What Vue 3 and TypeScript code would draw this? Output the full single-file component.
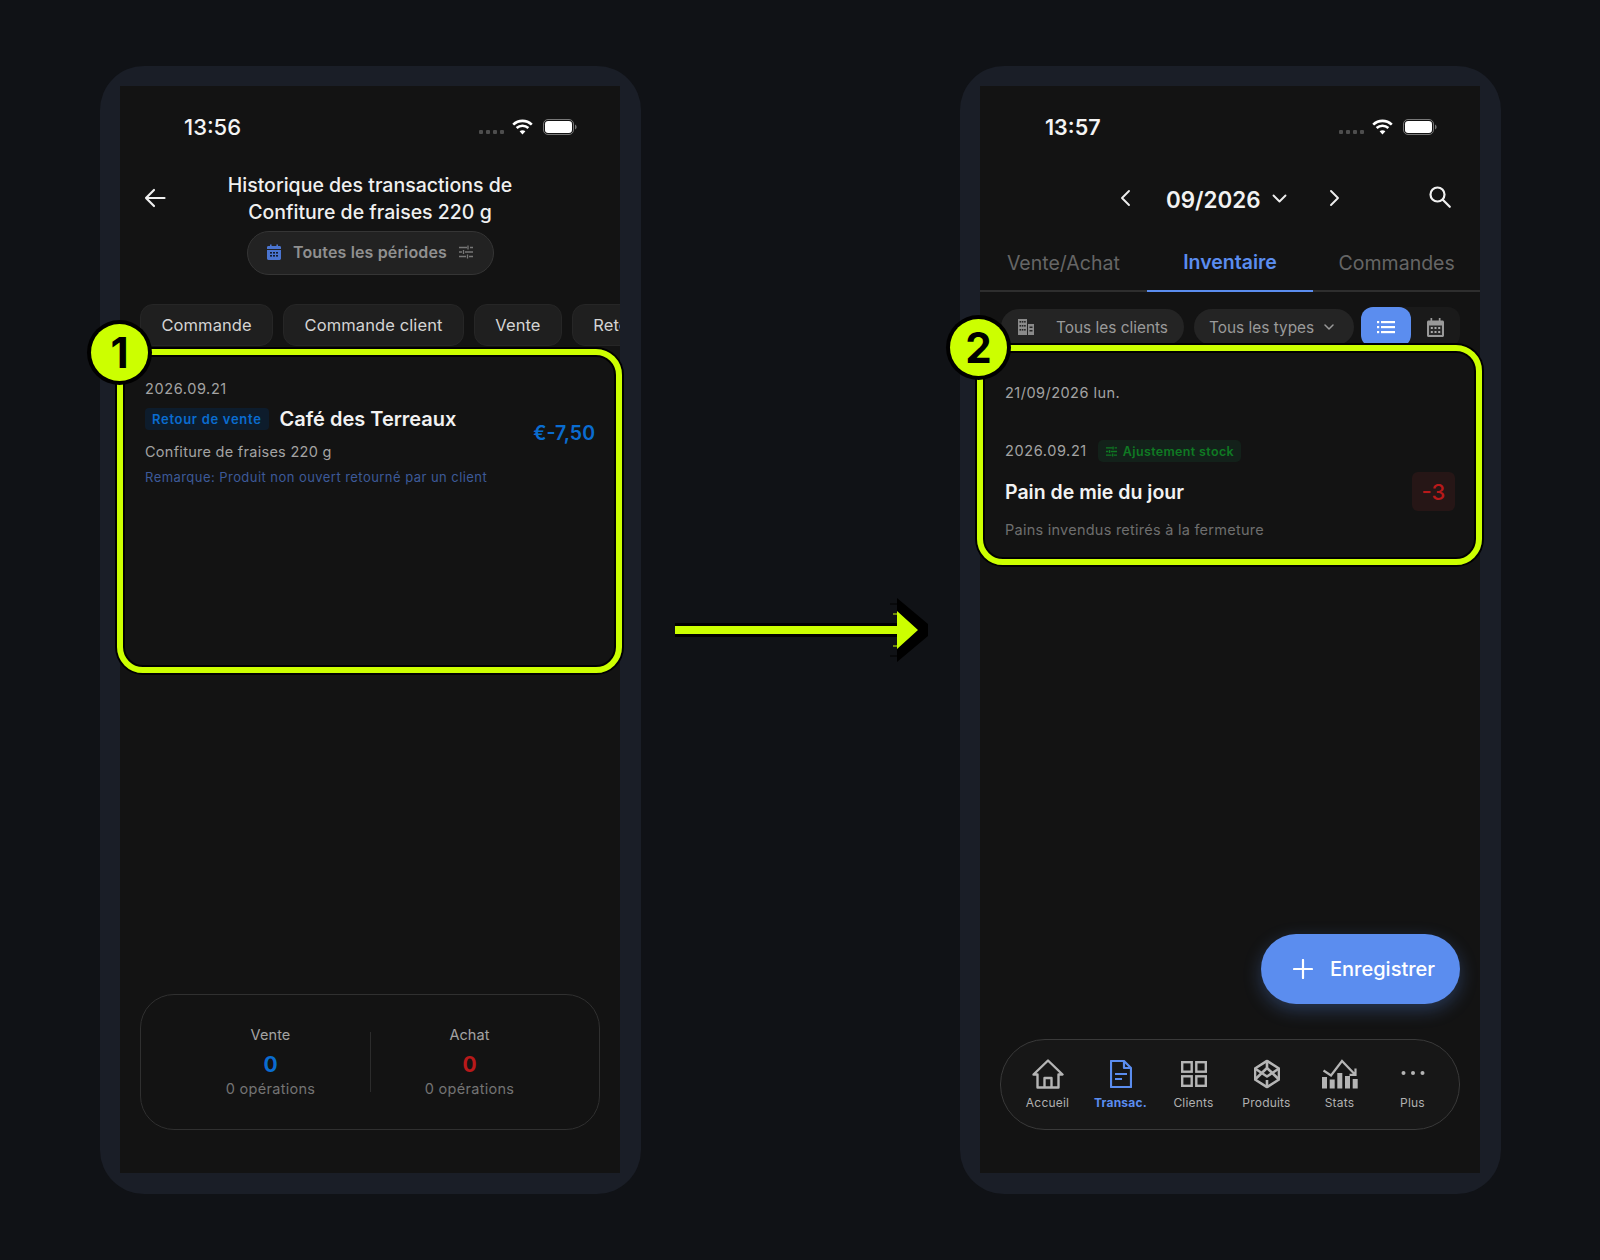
<script setup lang="ts">
const chips = ['Commande', 'Commande client', 'Vente', 'Retour de vente']

const summary = [
  { label: 'Vente', tone: 'sale' },
  { label: 'Achat', tone: 'buy' }
]

const navItems = [
  { label: 'Accueil', icon: 'home' },
  { label: 'Transac.', icon: 'doc', active: true },
  { label: 'Clients', icon: 'grid' },
  { label: 'Produits', icon: 'box' },
  { label: 'Stats', icon: 'stats' },
  { label: 'Plus', icon: 'more' }
]
</script>

<template>
  <div class="page">
    <!-- left phone -->
    <div class="phone">
      <div class="screen">
        <div class="status">
          <span class="time">13:56</span>
          <div class="status-icons">
            <svg width="25" height="6" viewBox="0 0 25 6" class="dots"><rect x="0" y="1" width="4" height="4" rx="1"/><rect x="7" y="1" width="4" height="4" rx="1"/><rect x="14" y="1" width="4" height="4" rx="1"/><rect x="21" y="1" width="4" height="4" rx="1"/></svg>
            <svg class="wifi" width="21" height="16" viewBox="0 0 21 16" fill="none" stroke="#fff" stroke-width="2.6"><path d="M1.2 5.6c5.3-5 13.3-5 18.6 0"/><path d="M4.6 9c3.4-3 8.4-3 11.8 0"/><path d="M10.5 15.4 7.6 12.3c1.7-1.4 4.1-1.4 5.8 0z" fill="#fff" stroke="none"/></svg>
            <svg width="34" height="16" viewBox="0 0 34 16"><rect x=".5" y=".5" width="30" height="15" rx="4.5" fill="none" stroke="#777"/><rect x="2" y="2" width="27" height="12" rx="3.2" fill="#fff"/><path d="M32 5.5c1 .4 1.6 1.4 1.6 2.5s-.6 2.1-1.6 2.5z" fill="#777"/></svg>
          </div>
        </div>

        <div class="detail-head">
          <svg class="back" width="22" height="20" viewBox="0 0 22 20" fill="none" stroke="#f0f0f0" stroke-width="2.2" stroke-linecap="round" stroke-linejoin="round"><path d="M20.5 10H2M10 2 2 10l8 8"/></svg>
          <h1 class="detail-title">Historique des transactions de<br />Confiture de fraises 220 g</h1>
          <div class="period">
            <svg width="14" height="16" viewBox="0 0 14 16"><path d="M0 3.4c0-.8.6-1.4 1.4-1.4H3V.5h1.6V2h4.8V.5H11V2h1.6c.8 0 1.4.6 1.4 1.4V5H0zM0 6h14v8.6c0 .8-.6 1.4-1.4 1.4H1.4C.6 16 0 15.4 0 14.6z" fill="#4a74d0"/><g fill="#131b2e"><rect x="3" y="8" width="2" height="1.6"/><rect x="6" y="8" width="2" height="1.6"/><rect x="9" y="8" width="2" height="1.6"/><rect x="3" y="11" width="2" height="1.6"/><rect x="6" y="11" width="2" height="1.6"/><rect x="9" y="11" width="2" height="1.6"/></g></svg>
            <span>Toutes les périodes</span>
            <svg width="14" height="14" viewBox="0 0 14 14" fill="none" stroke="#777" stroke-width="1.3"><path d="M0 2.5h8M11 2.5h3M9 .5v4M0 7h3M6 7h8M4.5 5v4M0 11.5h7M10 11.5h4M8.5 9.5v4"/></svg>
          </div>
        </div>

        <div class="chips">
          <div v-for="chip in chips" :key="chip" class="chip">{{ chip }}</div>
        </div>

        <div class="tx">
          <div class="tx-main">
            <div class="tx-date">2026.09.21</div>
            <div class="tx-row">
              <span class="tag-blue">Retour de vente</span>
              <span class="tx-name">Café des Terreaux</span>
            </div>
            <div class="tx-product">Confiture de fraises 220 g</div>
            <div class="tx-note">Remarque: Produit non ouvert retourné par un client</div>
          </div>
          <div class="tx-amount">€-7,50</div>
        </div>

        <div class="summary">
          <div v-for="item in summary" :key="item.label" class="sum-col">
            <div class="sum-label">{{ item.label }}</div>
            <div class="sum-value" :class="item.tone">0</div>
            <div class="sum-ops">0 opérations</div>
          </div>
          <div class="sum-divider"></div>
        </div>
      </div>
    </div>

    <!-- arrow between phones -->
    <svg class="arrow" width="319" height="80" viewBox="641 590 319 80">
      <path d="M675 623H897V598L928 624V636L897 662V637H675Z" fill="#000" />
      <path d="M890 604h7M890 656h7" stroke="#000" stroke-width="1" />
      <path d="M675 626H897V611L918 630 897 649V634H675Z" fill="#ccff00" />
      <path d="M893 614h4M893 646h4" stroke="#ccff00" stroke-width="1" />
    </svg>

    <!-- right phone -->
    <div class="phone">
      <div class="screen">
        <div class="status">
          <span class="time time-two">13:57</span>
          <div class="status-icons">
            <svg width="25" height="6" viewBox="0 0 25 6" class="dots"><rect x="0" y="1" width="4" height="4" rx="1"/><rect x="7" y="1" width="4" height="4" rx="1"/><rect x="14" y="1" width="4" height="4" rx="1"/><rect x="21" y="1" width="4" height="4" rx="1"/></svg>
            <svg class="wifi" width="21" height="16" viewBox="0 0 21 16" fill="none" stroke="#fff" stroke-width="2.6"><path d="M1.2 5.6c5.3-5 13.3-5 18.6 0"/><path d="M4.6 9c3.4-3 8.4-3 11.8 0"/><path d="M10.5 15.4 7.6 12.3c1.7-1.4 4.1-1.4 5.8 0z" fill="#fff" stroke="none"/></svg>
            <svg width="34" height="16" viewBox="0 0 34 16"><rect x=".5" y=".5" width="30" height="15" rx="4.5" fill="none" stroke="#777"/><rect x="2" y="2" width="27" height="12" rx="3.2" fill="#fff"/><path d="M32 5.5c1 .4 1.6 1.4 1.6 2.5s-.6 2.1-1.6 2.5z" fill="#777"/></svg>
          </div>
        </div>

        <div class="month-bar">
          <svg class="prev" width="11" height="18" viewBox="0 0 11 18" fill="none" stroke="#eee" stroke-width="1.9" stroke-linecap="round" stroke-linejoin="round"><path d="M9 2 2 9l7 7"/></svg>
          <span class="month">09/2026</span>
          <svg class="caret" width="15" height="9" viewBox="0 0 15 9" fill="none" stroke="#eee" stroke-width="1.9" stroke-linecap="round" stroke-linejoin="round"><path d="m1.5 1.5 6 6 6-6"/></svg>
          <svg class="next" width="11" height="18" viewBox="0 0 11 18" fill="none" stroke="#eee" stroke-width="1.9" stroke-linecap="round" stroke-linejoin="round"><path d="m2 2 7 7-7 7"/></svg>
          <svg class="search" width="24" height="24" viewBox="0 0 24 24" fill="none" stroke="#f0f0f0" stroke-width="2.2" stroke-linecap="round"><circle cx="9.5" cy="9.5" r="7"/><path d="m14.8 14.8 7 7"/></svg>
        </div>

        <div class="tabs">
          <div class="tab">Vente/Achat</div>
          <div class="tab tab-on">Inventaire</div>
          <div class="tab">Commandes</div>
        </div>

        <div class="filters">
          <div class="filter filter-clients">
            <svg width="16" height="16" viewBox="0 0 16 16" fill="#8a8a8a"><path d="M0 0h9v16H0zM10 5h6v11h-6z"/><g fill="#242424"><rect x="1.5" y="2" width="1.6" height="1.6"/><rect x="3.8" y="2" width="1.6" height="1.6"/><rect x="6.1" y="2" width="1.6" height="1.6"/><rect x="1.5" y="6" width="1.6" height="1.6"/><rect x="3.8" y="6" width="1.6" height="1.6"/><rect x="6.1" y="6" width="1.6" height="1.6"/><rect x="1.5" y="10" width="1.6" height="1.6"/><rect x="3.8" y="10" width="1.6" height="1.6"/><rect x="6.1" y="10" width="1.6" height="1.6"/><rect x="11.5" y="7.5" width="3" height="1.5"/><rect x="11.5" y="11" width="3" height="1.5"/></g></svg>
            <span>Tous les clients</span>
          </div>
          <div class="filter filter-types">
            <span>Tous les types</span>
            <svg width="10" height="7" viewBox="0 0 10 7" fill="none" stroke="#999" stroke-width="1.5" stroke-linecap="round" stroke-linejoin="round"><path d="m1 1 4 4 4-4"/></svg>
          </div>
          <div class="view-switch">
            <div class="view-btn view-on">
              <svg width="18" height="14" viewBox="0 0 18 14" fill="#fff"><rect x="0" y="1" width="2.2" height="2.2"/><rect x="4" y="1" width="14" height="2.2"/><rect x="0" y="6" width="2.2" height="2.2"/><rect x="4" y="6" width="14" height="2.2"/><rect x="0" y="11" width="2.2" height="2.2"/><rect x="4" y="11" width="14" height="2.2"/></svg>
            </div>
            <div class="view-btn">
              <svg width="17" height="19" viewBox="0 0 17 19"><path d="M1.5 2.5H3.5V0h1.7v2.5h6.6V0h1.7v2.5h2c.8 0 1.5.7 1.5 1.5v13.500c0 .8-.7 1.5-1.5 1.5h-14C.7 19 0 18.300 0 17.500V4C0 3.200.7 2.500 1.500 2.500z" fill="#999"/><rect x="2" y="7.5" width="13" height="9.5" fill="#2a2a2a"/><g fill="#aaa"><rect x="3.8" y="9" width="2" height="2"/><rect x="7.5" y="9" width="2" height="2"/><rect x="11.2" y="9" width="2" height="2"/><rect x="3.8" y="13" width="2" height="2"/><rect x="7.5" y="13" width="2" height="2"/><rect x="11.2" y="13" width="2" height="2"/></g></svg>
            </div>
          </div>
        </div>

        <div class="day">21/09/2026 lun.</div>

        <div class="stock">
          <div class="stock-top">
            <span class="tx-date">2026.09.21</span>
            <span class="tag-green">
              <svg width="11" height="11" viewBox="0 0 14 14" fill="none" stroke="#0f7a23" stroke-width="1.6"><path d="M0 2.5h8M11 2.5h3M9 .5v4M0 7h3M6 7h8M4.5 5v4M0 11.5h7M10 11.5h4M8.5 9.5v4"/></svg>
              Ajustement stock
            </span>
          </div>
          <div class="stock-mid">
            <span class="stock-name">Pain de mie du jour</span>
            <span class="stock-qty">-3</span>
          </div>
          <div class="stock-note">Pains invendus retirés à la fermeture</div>
        </div>

        <div class="fab">
          <svg width="20" height="20" viewBox="0 0 20 20" stroke="#fff" stroke-width="2.2" stroke-linecap="round"><path d="M10 1v18M1 10h18"/></svg>
          <span>Enregistrer</span>
        </div>

        <nav class="nav">
          <div v-for="item in navItems" :key="item.label" class="nav-item" :class="{ 'nav-on': item.active }">
            <svg v-if="item.icon === 'home'" width="32" height="30" viewBox="0 0 32 30" fill="none" stroke="#b5b5b5" stroke-width="2.4" stroke-linejoin="round"><path d="M1.5 15.5 16 1.5l14.5 14H26.5V28.5H5.5V15.5z"/><path d="M12.5 28.5V19h7v9.5"/></svg>
            <svg v-else-if="item.icon === 'doc'" width="22" height="28" viewBox="0 0 22 28" fill="none" stroke="#5b8def" stroke-width="2.2" stroke-linejoin="round"><path d="M1 1h13l7 7v19H1z"/><path d="M14 1v7h7M5 14h12M5 19h7"/></svg>
            <svg v-else-if="item.icon === 'grid'" width="26" height="26" viewBox="0 0 26 26" fill="none" stroke="#b5b5b5" stroke-width="2.4"><rect x="1.2" y="1.2" width="9.5" height="9.5"/><rect x="15.3" y="1.2" width="9.5" height="9.5"/><rect x="1.2" y="15.3" width="9.5" height="9.5"/><rect x="15.3" y="15.3" width="9.5" height="9.5"/></svg>
            <svg v-else-if="item.icon === 'box'" width="26" height="29" viewBox="0 0 26 29" fill="none" stroke="#b5b5b5" stroke-width="2.6" stroke-linejoin="round"><path d="M13 1.3 25 9v11l-12 7.7L1 20V9z"/><path d="M13 1.3V8.5M13 20.5v7.2M1 9l12 8 12-8M1 20l12-11.5L25 20"/></svg>
            <svg v-else-if="item.icon === 'stats'" width="36" height="30" viewBox="0 0 36 30"><path d="M1.5 11.5 9 16.5 20 2l13 13.5M33.5 9.5v6.300h-6" fill="none" stroke="#b5b5b5" stroke-width="2.2"/><g fill="#b5b5b5"><rect x="0" y="18" width="5" height="11.5"/><rect x="7.7" y="20.5" width="5" height="9"/><rect x="15.3" y="14" width="5" height="15.5"/><rect x="23" y="17" width="5" height="12.5"/><rect x="30.7" y="20" width="5" height="9.5"/></g></svg>
            <svg v-else class="more" width="24" height="6" viewBox="0 0 24 6" fill="#b5b5b5"><circle cx="2.5" cy="3" r="2"/><circle cx="12" cy="3" r="2"/><circle cx="21.5" cy="3" r="2"/></svg>
            <span class="nav-label">{{ item.label }}</span>
          </div>
        </nav>
      </div>
    </div>

    <!-- callouts drawn over the screens -->
    <div class="mark mark-one"></div>
    <div class="badge badge-one">1</div>
    <div class="mark mark-two"></div>
    <div class="badge badge-two">2</div>
  </div>
</template>

<style>
html, body {
  margin: 0;
  background: #101216;
}
</style>

<style scoped>
.page {
  position: relative;
  width: 1600px;
  height: 1260px;
  box-sizing: border-box;
  padding: 66px 100px 0;
  display: flex;
  align-items: flex-start;
  background: #101216;
  font-family: Inter, "Liberation Sans", sans-serif;
  overflow: hidden;
}

.phone {
  width: 541px;
  height: 1128px;
  flex-shrink: 0;
  box-sizing: border-box;
  padding: 20px 21px 21px 20px;
  border-radius: 44px;
  background: #1a1e27;
  overflow: hidden;
}

.screen {
  position: relative;
  height: 100%;
  display: flex;
  flex-direction: column;
  background: #131313;
  color: #f2f2f2;
}

.arrow {
  flex-shrink: 0;
  margin-top: 524px;
}

.status {
  height: 82px;
  flex-shrink: 0;
  display: flex;
  align-items: center;
  justify-content: space-between;
  padding: 0 43px 0 64px;
  box-sizing: border-box;
}

.time {
  font-size: 22px;
  font-weight: 500;
  color: #f4f4f4;
}

.time-two {
  font-size: 21.5px;
  font-weight: 600;
  margin-left: 1px;
}

.status-icons {
  display: flex;
  align-items: center;
  gap: 9px;
}

.wifi {
  margin-right: 1px;
}

.dots {
  fill: #4d4d4d;
  margin-top: 10px;
  margin-right: -1px;
}

.detail-head {
  position: relative;
  display: flex;
  flex-direction: column;
  align-items: center;
  padding-top: 4px;
}

.back {
  position: absolute;
  left: 24px;
  top: 20px;
}

.detail-title {
  margin: 0;
  font-size: 19.5px;
  line-height: 27px;
  font-weight: 500;
  text-align: center;
  color: #f0f0f0;
}

.period {
  margin-top: 5px;
  width: 247px;
  height: 44px;
  box-sizing: border-box;
  padding-bottom: 2px;
  display: flex;
  align-items: center;
  justify-content: center;
  gap: 12px;
  border: 1px solid #353535;
  border-radius: 22px;
  background: #222;
  color: #909090;
  font-size: 16px;
  font-weight: 600;
  letter-spacing: 0.15px;
}

.chips {
  margin-top: 29px;
  padding-left: 20px;
  display: flex;
  gap: 10px;
  overflow: hidden;
  flex-shrink: 0;
}

.chip {
  height: 42px;
  box-sizing: border-box;
  padding: 0 20.4px;
  display: flex;
  align-items: center;
  flex-shrink: 0;
  white-space: nowrap;
  background: #1f1f1f;
  border: 1px solid #262626;
  border-radius: 13px;
  font-size: 16.5px;
  letter-spacing: 0.1px;
  color: #d4d4d4;
}

.tx {
  margin-top: 33px;
  padding: 0 25px;
  display: flex;
  justify-content: space-between;
  align-items: center;
}

.tx-date {
  font-size: 14.5px;
  line-height: 20px;
  color: #a3a3a3;
  letter-spacing: 0.6px;
}

.tx-row {
  margin-top: 8px;
  display: flex;
  align-items: center;
  gap: 11px;
}

.tag-blue {
  height: 22px;
  display: flex;
  align-items: center;
  padding: 0 7px;
  border-radius: 4px;
  background: #0d1c2c;
  color: #0a6cd0;
  font-size: 13px;
  font-weight: 600;
  letter-spacing: 0.7px;
}

.tx-name {
  font-size: 20px;
  font-weight: 600;
  color: #f2f2f2;
}

.tx-product {
  margin-top: 11px;
  font-size: 14.5px;
  line-height: 20px;
  color: #a3a3a3;
  letter-spacing: 0.28px;
}

.tx-note {
  margin-top: 6px;
  font-size: 13px;
  line-height: 18px;
  color: #3d5a99;
  letter-spacing: 0.45px;
}

.tx-amount {
  font-size: 19.5px;
  font-weight: 600;
  color: #0a6cd0;
  margin-top: 1px;
}

.summary {
  position: relative;
  margin: auto 20px 43px;
  height: 136px;
  box-sizing: border-box;
  display: flex;
  border: 1px solid #303030;
  border-radius: 34px;
  padding: 30px 30px 0;
}

.sum-col {
  flex: 1;
  text-align: center;
}

.sum-divider {
  position: absolute;
  left: 229px;
  top: 37px;
  width: 1px;
  height: 60px;
  background: #2c2c2c;
}

.sum-label {
  font-size: 14.5px;
  line-height: 20px;
  color: #a3a3a3;
  letter-spacing: 0.1px;
}

.sum-value {
  margin-top: 7px;
  font-size: 21px;
  line-height: 26px;
  font-weight: 700;
}

.sale {
  color: #0a6cd0;
}

.buy {
  color: #b8191a;
}

.sum-ops {
  font-size: 14.5px;
  line-height: 22px;
  color: #747474;
  letter-spacing: 0.3px;
}

.month-bar {
  position: relative;
  height: 58px;
  margin-top: 2px;
  flex-shrink: 0;
  display: flex;
  align-items: center;
}

.month-bar svg {
  position: absolute;
}

.prev { left: 140px; top: 19px; }
.caret { left: 292px; top: 24px; }
.next { left: 349px; top: 19px; }
.search { left: 448px; top: 15px; }

.month {
  margin-left: 186px;
  font-size: 22.4px;
  font-weight: 600;
  color: #f2f2f2;
}

.tabs {
  display: flex;
  height: 64px;
  padding-top: 6px;
  flex-shrink: 0;
  box-sizing: border-box;
  border-bottom: 2px solid #2e2e2e;
}

.tab {
  flex: 1;
  display: flex;
  align-items: center;
  justify-content: center;
  margin-bottom: -2px;
  font-size: 19.5px;
  color: #666;
}

.tab-on {
  font-weight: 600;
  color: #5b8def;
  border-bottom: 2px solid #5b8def;
}

.filters {
  margin-top: 15px;
  padding: 0 20px 0 21px;
  height: 40px;
  display: flex;
  align-items: center;
  flex-shrink: 0;
}

.filter {
  height: 36px;
  box-sizing: border-box;
  display: flex;
  align-items: center;
  background: #242424;
  border-radius: 18px;
  font-size: 15.4px;
  color: #9a9a9a;
}

.filter-clients {
  width: 183px;
  padding-left: 17px;
  gap: 22px;
}

.filter-types {
  width: 160px;
  margin-left: 10px;
  padding-left: 15px;
  gap: 10px;
}

.view-switch {
  margin-left: 7px;
  width: 99px;
  height: 40px;
  display: flex;
  background: #1a1a1a;
  border-radius: 12px;
}

.view-btn {
  flex: 1;
  display: flex;
  align-items: center;
  justify-content: center;
  border-radius: 12px;
}

.view-on {
  background: #5b8def;
}

.day {
  margin: 36px 0 0 25px;
  font-size: 14.5px;
  line-height: 20px;
  color: #a3a3a3;
  letter-spacing: 0.47px;
}

.stock {
  margin-top: 37px;
  padding: 0 25px;
}

.stock-top {
  display: flex;
  align-items: center;
  gap: 11px;
}

.tag-green {
  height: 22px;
  display: flex;
  align-items: center;
  gap: 6px;
  padding: 0 7px 0 8px;
  border-radius: 5px;
  background: #13211a;
  color: #0f7a23;
  font-size: 12.5px;
  font-weight: 600;
  letter-spacing: 0.35px;
}

.stock-mid {
  margin-top: 10px;
  height: 39px;
  display: flex;
  align-items: center;
  justify-content: space-between;
}

.stock-name {
  font-size: 19.5px;
  font-weight: 600;
  color: #f2f2f2;
}

.stock-qty {
  width: 43px;
  height: 39px;
  display: flex;
  align-items: center;
  justify-content: center;
  border-radius: 6px;
  background: #261616;
  color: #b8191a;
  font-size: 22px;
  font-weight: 500;
}

.stock-note {
  margin-top: 9px;
  font-size: 14.5px;
  line-height: 20px;
  color: #6e6e6e;
  letter-spacing: 0.25px;
}

.fab {
  position: absolute;
  left: 281px;
  top: 848px;
  width: 199px;
  height: 70px;
  box-sizing: border-box;
  padding-left: 32px;
  display: flex;
  align-items: center;
  gap: 17px;
  border-radius: 35px;
  background: #5b8def;
  box-shadow: 0 6px 18px rgba(91, 141, 239, 0.3);
  color: #fff;
  font-size: 20px;
  font-weight: 500;
}

.nav {
  margin: auto 20px 43px;
  height: 91px;
  box-sizing: border-box;
  padding: 0 10px;
  display: flex;
  border: 1px solid #3a3a3a;
  border-radius: 45px;
  background: #171717;
}

.nav-item {
  flex: 1;
  position: relative;
  display: flex;
  flex-direction: column;
  align-items: center;
  color: #b0b0b0;
}

.nav-item svg {
  position: absolute;
  top: 34px;
  transform: translateY(-50%);
}

.nav-item svg.more {
  top: 33px;
}

.nav-label {
  margin-top: 55px;
  font-size: 12px;
  line-height: 16px;
  letter-spacing: 0.2px;
}

.nav-on {
  color: #5b8def;
  font-weight: 700;
}

.mark {
  position: absolute;
  box-sizing: border-box;
  border: 6px solid #ccff00;
  border-radius: 26px;
  box-shadow: 0 0 0 2px #000, inset 0 0 0 2px #000;
}

.mark-one {
  left: 117px;
  top: 349px;
  width: 505px;
  height: 324px;
}

.mark-two {
  left: 977px;
  top: 345px;
  width: 505px;
  height: 220px;
}

.badge {
  position: absolute;
  width: 57px;
  height: 57px;
  display: flex;
  align-items: center;
  justify-content: center;
  background: #ccff00;
  border-radius: 50%;
  box-shadow: 0 0 0 4px #000;
  color: #000;
  font-size: 42px;
  font-weight: 700;
}

.badge-one {
  left: 91px;
  top: 324px;
}

.badge-two {
  left: 950px;
  top: 319px;
}
</style>
